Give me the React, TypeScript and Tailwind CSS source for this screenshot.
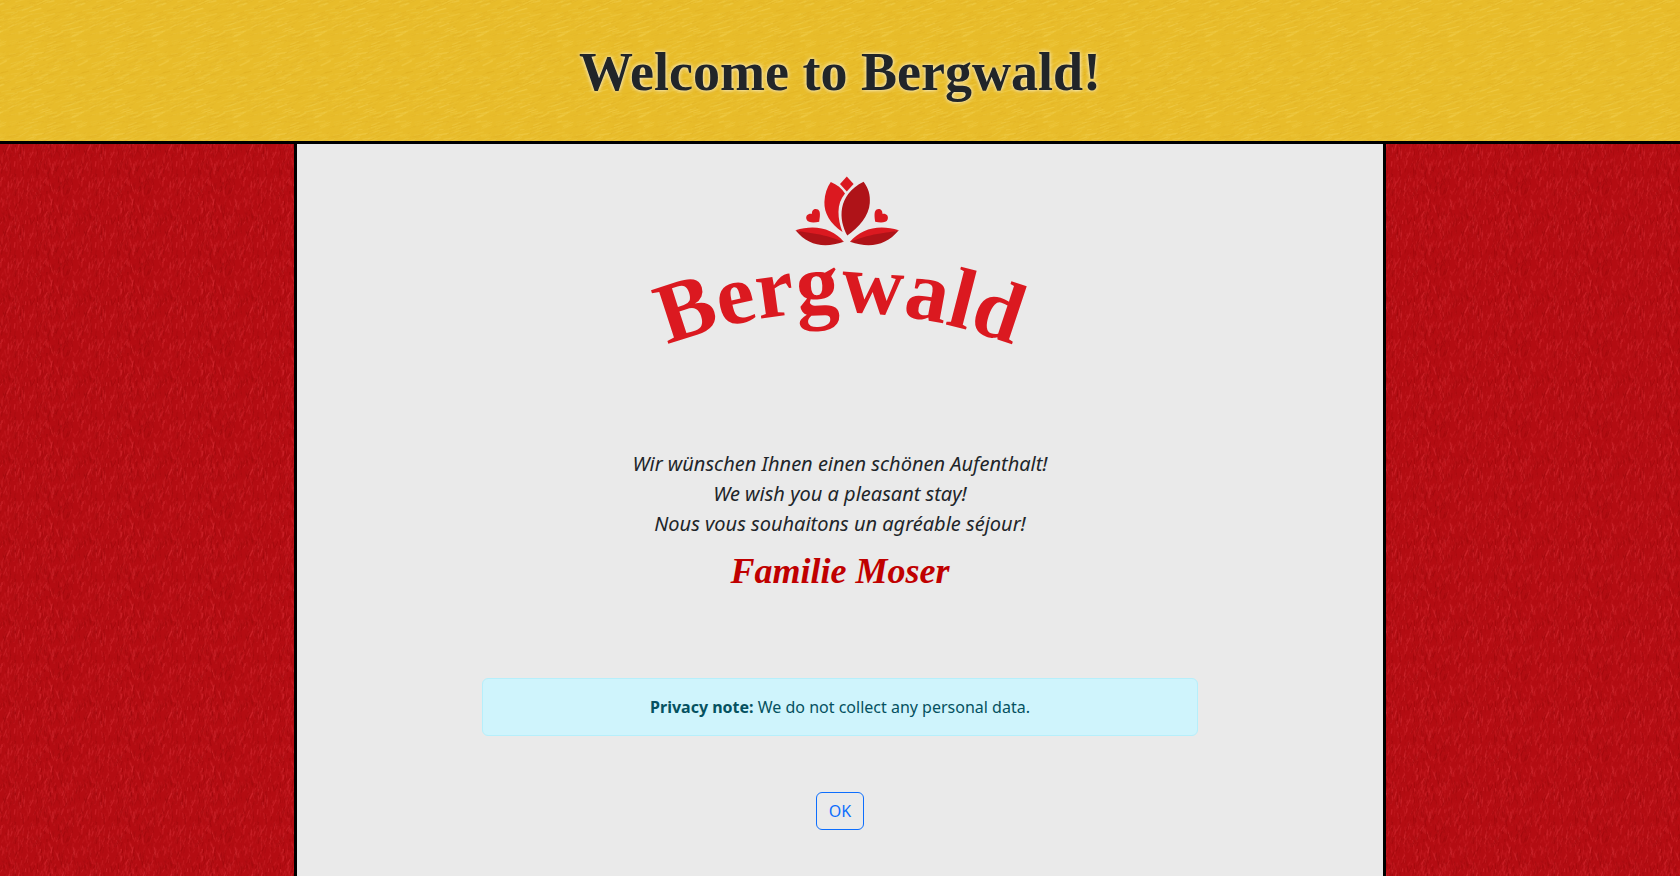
import React from "react";

type Stroke = { x: number; y: number; dx: number; dy: number; color: string; width: number; opacity: number };

type Grain = {
  seed: number;
  size: number;
  count: number;
  angle: number;
  spread: number;
  length: number;
  colors: string[];
};

function makeStrokes({ seed, size, count, angle, spread, length, colors }: Grain): Stroke[] {
  let state = seed;
  const next = () => {
    state = (state * 1664525 + 1013904223) % 4294967296;
    return state / 4294967296;
  };
  return Array.from({ length: count }, () => {
    const a = ((angle + (next() - 0.5) * spread) * Math.PI) / 180;
    const l = length * (0.4 + next());
    return {
      x: next() * size,
      y: next() * size,
      dx: Math.cos(a) * l,
      dy: Math.sin(a) * l,
      color: colors[Math.floor(next() * colors.length)],
      width: 0.6 + next() * 0.8,
      opacity: 0.12 + next() * 0.42,
    };
  });
}

const gold: Grain = {
  seed: 11,
  size: 81,
  count: 420,
  angle: -18,
  spread: 22,
  length: 9,
  colors: ["#f2cf4c", "#efc93c", "#dfae1e", "#e2b324", "#eccb45"],
};

const crimson: Grain = {
  seed: 29,
  size: 81,
  count: 800,
  angle: -86,
  spread: 50,
  length: 5,
  colors: ["#dc3038", "#d0222a", "#cc1c24", "#9c0408", "#a20509", "#980206"],
};

function Texture({ id, base, grain }: { id: string; base: string; grain: Grain }) {
  const strokes = makeStrokes(grain);
  const wraps = [-grain.size, 0, grain.size];
  return (
    <svg className="absolute inset-0 -z-10 h-full w-full" aria-hidden="true">
      <defs>
        <g id={`${id}-strokes`} strokeLinecap="round">
          {strokes.map((s, i) => (
            <path
              key={i}
              d={`M${s.x.toFixed(1)} ${s.y.toFixed(1)}l${s.dx.toFixed(1)} ${s.dy.toFixed(1)}`}
              stroke={s.color}
              strokeWidth={s.width.toFixed(1)}
              opacity={s.opacity.toFixed(2)}
            />
          ))}
        </g>
        <pattern id={id} width={grain.size} height={grain.size} patternUnits="userSpaceOnUse">
          <rect width={grain.size} height={grain.size} fill={base} />
          {wraps.map((x) => wraps.map((y) => <use key={`${x},${y}`} href={`#${id}-strokes`} x={x} y={y} />))}
        </pattern>
      </defs>
      <rect width="100%" height="100%" fill={`url(#${id})`} />
    </svg>
  );
}

function Logo() {
  return (
    <svg className="h-[220px] w-[440px] max-w-full overflow-visible" viewBox="-20 0 440 220" role="img" aria-label="Bergwald">
      <g fill="#db1920">
        <path d="M206.8 6.5 213.6 14 206.8 21.5 200 14Z" />
        <path d="M190.8 12C197 14.500 202 18.500 205 23.500C196 34 197.500 49 202.500 62C190 53.500 184 43 184.400 32C184.700 24 187 17.500 190.800 12Z" />
        <path d="M179.200 51.800C174 52.800 168 53 166.600 49.500C165 45.500 168.500 43 172 43.800C171.500 40 175 37.800 178 39.600C181 41.500 179.800 47.500 179.200 51.800Z" />
        <path d="M235.200 51.800C240.400 52.800 246.400 53 247.600 49.500C249 45.500 245.900 43 242.400 43.800C242.800 40 239.400 37.800 236.600 39.600C233.600 41.500 234.600 47.500 235.200 51.800Z" />
        <path d="M155.500 60.200C175 54 193 58.500 203.800 71.800C188 72 170 66 155.500 60.200Z" />
        <path d="M258.800 60.200C239 54 221 58.500 210 71.800C226 72 244 66 258.800 60.200Z" />
      </g>
      <g fill="#af1318">
        <path d="M223.600 11.800C228.500 18 230.500 25.500 229.800 33C229 46 219 57 207.300 65.500C198.500 50 197 25 223.600 11.800Z" />
        <path d="M155.500 60.200C163 63 180 62 203.800 71.800C184 78.500 168 75.500 155.500 60.200Z" />
        <path d="M258.800 60.200C251 63 234 62 210 71.800C230 78.500 246 75.500 258.800 60.200Z" />
      </g>
      <path id="logo-arc" d="M20 178Q200 106 380 178" fill="none" />
      <text
        fill="#db1920"
        fontSize="86"
        fontWeight="700"
        fontFamily="'Liberation Serif', serif"
        textAnchor="middle"
      >
        <textPath href="#logo-arc" startOffset="50%">
          Bergwald
        </textPath>
      </text>
    </svg>
  );
}

export default function App() {
  return (
    <div className="relative isolate flex min-h-screen flex-col text-center font-['Noto_Sans',sans-serif] text-base text-[#212529]">
      <Texture id="crimson" base="#b40c12" grain={crimson} />
      <header className="relative isolate border-b-3 border-black px-4 pt-[38px] pb-[34px]">
        <Texture id="gold" base="#e8bc2a" grain={gold} />
        <h1 className="font-['Liberation_Serif',serif] text-[54px] leading-[69px] font-bold [text-shadow:0_0_4px_#fff]">
          Welcome to Bergwald!
        </h1>
      </header>
      <main className="mx-auto flex w-[65%] grow flex-col items-center border-x-3 border-black bg-[#eaeaea] px-1.5 pt-[26px] pb-11">
        <Logo />
        <p className="mt-[59px] text-xl leading-[30px] italic">
          Wir wünschen Ihnen einen schönen Aufenthalt!
          <br />
          We wish you a pleasant stay!
          <br />
          Nous vous souhaitons un agréable séjour!
        </p>
        <p className="mt-2 font-['Liberation_Serif',serif] text-4xl leading-[48px] font-bold text-[#c00000] italic">
          Familie Moser
        </p>
        <div
          role="note"
          className="mt-[83px] w-2/3 rounded-md border border-[#b6effb] bg-[#cff4fc] p-4 leading-6 text-[#055160]"
        >
          <strong className="font-bold">Privacy note:</strong> We do not collect any personal data.
        </div>
        <button
          type="button"
          className="mt-14 cursor-pointer rounded-md border border-[#0d6efd] px-3 py-1.5 leading-6 text-[#0d6efd] hover:bg-[#0d6efd] hover:text-white"
        >
          OK
        </button>
      </main>
    </div>
  );
}
